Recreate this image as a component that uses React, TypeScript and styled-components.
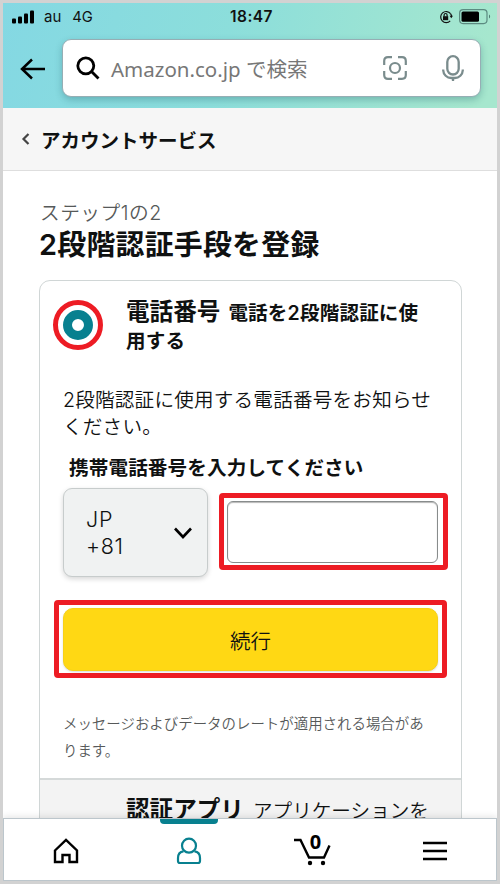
import React from "react";
import styled, { createGlobalStyle } from "styled-components";

const GlobalStyle = createGlobalStyle`
  *, *::before, *::after { box-sizing: border-box; }
  body {
    margin: 0;
    font-family: Inter, "Noto Sans CJK JP", sans-serif;
    color: #0f1111;
  }
`;

const Screen = styled.div`
  display: flex;
  flex-direction: column;
  width: 500px;
  height: 884px;
  border: 3px solid #d2d2d2;
  background: #fff;
  overflow: hidden;
`;

const Header = styled.header`
  flex: none;
  height: 105px;
  background: linear-gradient(105deg, #84d8e3 0%, #8cdedb 45%, #a6e7ce 95%);
`;

const StatusBar = styled.div`
  display: grid;
  grid-template-columns: 1fr auto 1fr;
  align-items: center;
  height: 28px;
  padding: 0 6px 0 9px;
  color: #111;
  font-size: 15px;
  line-height: 20px;
`;

const Carrier = styled.div`
  display: flex;
  align-items: center;
  gap: 10px;
`;

const Network = styled.span`
  margin-left: 1px;
  font-size: 14.8px;
`;

const Clock = styled.span`
  font-size: 15.5px;
  font-weight: 600;
  letter-spacing: 0.45px;
`;

const StatusIcons = styled.div`
  display: flex;
  justify-content: flex-end;
  align-items: center;
  gap: 6px;
`;

const SearchRow = styled.div`
  display: flex;
  align-items: center;
  padding: 8px 16px 0 17px;
`;

const BackIcon = styled.svg`
  flex: none;
  width: 26px;
  height: 24px;
  margin: 2px 16px 0 0;
`;

const SearchBox = styled.div`
  display: flex;
  align-items: center;
  flex: 1;
  height: 58px;
  padding: 0 16px 0 13px;
  border: 1px solid #96aeb4;
  border-radius: 9px;
  background: #fff;
  box-shadow: 0 3px 7px rgba(30, 95, 105, 0.32);
`;

const Placeholder = styled.span`
  flex: 1;
  margin: 2px 0 0 11px;
  color: #777;
  font-family: "Noto Sans", "Noto Sans CJK JP", sans-serif;
  font-size: 20.5px;
  line-height: 30px;
  white-space: pre;
`;

const MicIcon = styled.svg`
  margin-left: 35px;
`;

const Breadcrumb = styled.div`
  display: flex;
  align-items: center;
  flex: none;
  height: 63px;
  padding: 0 0 0 18px;
  border-bottom: 1px solid #dedede;
  background: #f6f6f6;
  font-size: 19.5px;
  font-weight: 600;
  gap: 10px;
`;

const Content = styled.main`
  flex: 1;
  min-height: 0;
  padding: 28px 35px 0 36px;
  overflow: hidden;
  white-space: nowrap;
`;

const Step = styled.p`
  margin: 0 0 0 1px;
  color: #565959;
  font-size: 19.7px;
  font-weight: 350;
  letter-spacing: 0.5px;
  line-height: 28px;
`;

const Heading = styled.h1`
  margin: 0;
  font-size: 28.9px;
  font-weight: 600;
  letter-spacing: 0.25px;
  line-height: 36px;
`;

const Card = styled.section`
  margin-top: 17px;
  border: 1px solid #d0d6d6;
  border-radius: 11px 11px 0 0;
  overflow: hidden;
`;

const Option = styled.div`
  display: flex;
  height: 76px;
  margin: 17px 0 0 13px;
`;

const RadioHighlight = styled.div`
  display: grid;
  place-items: center;
  width: 50px;
  height: 50px;
  margin: 2px 23px 0 0;
  border: 5px solid #ed1c24;
  border-radius: 50%;
`;

const Radio = styled.div`
  width: 30px;
  height: 30px;
  border: 9px solid #08808f;
  border-radius: 50%;
  background: #fff;
`;

const OptionText = styled.div`
  font-size: 19.55px;
  font-weight: 600;
  letter-spacing: 0.2px;
  line-height: 28px;
`;

const OptionTitle = styled.strong<{ $gap: number }>`
  margin-right: ${(p) => p.$gap}px;
  font-size: 23.6px;
  font-weight: 600;
  letter-spacing: 0;
`;

const Form = styled.div`
  padding: 0 13px 0 23px;
`;

const Description = styled.p`
  margin: 13px 0 0;
  font-size: 19.6px;
  font-weight: 350;
  letter-spacing: 0.2px;
  line-height: 27px;
`;

const FieldLabel = styled.div`
  margin: 14px 0 7px 6px;
  font-size: 19.6px;
  font-weight: 600;
  letter-spacing: 0.12px;
  line-height: 26px;
`;

const PhoneRow = styled.div`
  display: flex;
  align-items: flex-start;
`;

const CountrySelect = styled.button`
  display: flex;
  align-items: center;
  justify-content: space-between;
  width: 145px;
  height: 89px;
  padding: 0 14px 0 22px;
  border: 1px solid #c7cccc;
  border-radius: 9px;
  background: #f0f2f2;
  box-shadow: 0 2px 5px rgba(15, 17, 17, 0.17);
  color: #0f1111;
  font: 300 21.5px/27px Inter, sans-serif;
  letter-spacing: 0.7px;
  text-align: left;
`;

const Highlight = styled.div<{ $kind: "input" | "button" }>`
  width: ${(p) => (p.$kind === "input" ? 229 : 393)}px;
  height: ${(p) => (p.$kind === "input" ? 77 : 78)}px;
  margin: ${(p) => (p.$kind === "input" ? "5px 0 0 11px" : "23px 0 0 -9px")};
  padding: ${(p) => (p.$kind === "input" ? "3px 5px 2px 3px" : "3px 4px 2px 4px")};
  border: 5px solid #ed1c24;
  border-radius: 4px;
`;

const PhoneInput = styled.input`
  display: block;
  width: 100%;
  height: 100%;
  border: 1px solid #888c8c;
  border-radius: 6px;
  outline: none;
  background: #fff;
  box-shadow: inset 0 1px 1px rgba(15, 17, 17, 0.3);
`;

const ContinueButton = styled.button`
  display: block;
  width: 100%;
  height: 100%;
  padding: 0;
  border: 1px solid #f7d117;
  border-radius: 10px;
  background: #ffd814;
  box-shadow: 0 1px 2px rgba(15, 17, 17, 0.15);
  color: #0f1111;
  font: 350 20.5px/28px "Noto Sans CJK JP", sans-serif;
`;

const Notice = styled.p`
  margin: 32px 0 0;
  color: #565959;
  font-size: 14.45px;
  font-weight: 350;
  line-height: 27px;
`;

const AppOption = styled.div`
  height: 70px;
  margin-top: 14px;
  padding: 16px 0 0 86px;
  border-top: 2px solid #d5d9d9;
  background: #f3f3f3;
  font-size: 19.6px;
  font-weight: 350;
  line-height: 28px;
`;

const TabBar = styled.nav`
  display: grid;
  grid-template-columns: repeat(4, 123px);
  flex: none;
  height: 63px;
  border: 1px solid #bcc6cc;
  box-shadow: 0 -1px 7px rgba(15, 17, 17, 0.12);
  background: #fff;
  position: relative;
`;

const Tab = styled.div<{ $active?: boolean }>`
  display: grid;
  place-items: center;
  position: relative;
  padding-top: 2px;
  color: ${(p) => (p.$active ? "#08808f" : "#000")};

  &::before {
    content: "";
    display: ${(p) => (p.$active ? "block" : "none")};
    position: absolute;
    top: 0;
    left: 33px;
    width: 58px;
    height: 5px;
    border-radius: 0 0 4px 4px;
    background: #08808f;
  }
`;

const CartCount = styled.span`
  position: absolute;
  top: 13px;
  left: 59px;
  width: 13px;
  font-family: "Noto Sans", sans-serif;
  font-size: 20px;
  font-weight: 700;
  line-height: 20px;
  text-align: center;
`;

export default function App() {
  return (
    <>
      <GlobalStyle />
      <Screen>
        <Header>
          <StatusBar>
            <Carrier>
              <svg width="22" height="14" viewBox="0 0 22 14">
                <rect x="0" y="8.5" width="4" height="5" rx="1" />
                <rect x="6" y="6.5" width="4" height="7" rx="1" />
                <rect x="12" y="3.5" width="4" height="10" rx="1" />
                <rect x="18" y="0.5" width="4" height="13" rx="1" />
              </svg>
              <span>au</span>
              <Network>4G</Network>
            </Carrier>
            <Clock>18:47</Clock>
            <StatusIcons>
              <svg width="14" height="14" viewBox="0 0 14 14" fill="none" stroke="#111" strokeWidth="1.2">
                <path d="M11.5 3.6A5.5 5.5 0 1 0 11.2 10.8" />
                <path d="M11.5 3.6A5.5 5.5 0 0 1 12.5 6" />
                <path d="M10.6 5.7h3.4l-1.7 2.6z" fill="#111" stroke="none" />
                <rect x="4" y="6.2" width="5.2" height="4" fill="#111" stroke="none" />
                <path d="M5.1 6.5V5a1.5 1.5 0 0 1 3 0v1.5" />
              </svg>
              <svg width="32" height="16" viewBox="0 0 32 16">
                <rect x="0.6" y="0.6" width="27.4" height="14" rx="3.5" fill="none" stroke="#5b8a80" strokeWidth="1.2" />
                <rect x="2.5" y="2.5" width="17.5" height="10.2" rx="1.5" />
                <path d="M30 5.6v4c1.5-.5 1.5-3.5 0-4" fill="#4f7f75" />
              </svg>
            </StatusIcons>
          </StatusBar>
          <SearchRow>
            <BackIcon viewBox="0 0 26 24" fill="none" stroke="#000" strokeWidth="2.5">
              <path d="M25 12H2M12 2.5 2 12l10 9.5" />
            </BackIcon>
            <SearchBox>
              <svg width="24" height="24" viewBox="0 0 24 24" fill="none" stroke="#000" strokeWidth="2.8">
                <circle cx="9.8" cy="9.8" r="8" />
                <path d="m15.5 15.5 7 7" />
              </svg>
              <Placeholder>Amazon.co.jp で検索</Placeholder>
              <svg width="24" height="24" viewBox="0 0 24 24" fill="none" stroke="#7a8c8d" strokeWidth="2.2">
                <path d="M1.2 9V5q0-3.8 3.8-3.8h4M15 1.2h4q3.8 0 3.8 3.8v4M22.8 15v4q0 3.8-3.8 3.8h-4M9 22.8H5q-3.8 0-3.8-3.8v-4" />
                <circle cx="12" cy="12" r="5" />
              </svg>
              <MicIcon width="22" height="26" viewBox="0 0 22 26" fill="none" stroke="#7a8c8d" strokeWidth="2.3">
                <rect x="5.3" y="1.2" width="11.4" height="18.3" rx="5.7" />
                <path d="M1.2 14.5v.8a8 8 0 0 0 8 7.7h3.6a8 8 0 0 0 8-7.7v-.8M11 23v3" />
              </MicIcon>
            </SearchBox>
          </SearchRow>
        </Header>

        <Breadcrumb>
          <svg width="10" height="12" viewBox="0 0 10 12" fill="none" stroke="#444" strokeWidth="2.2">
            <path d="M7.5 1 2.5 6l5 5" />
          </svg>
          <span>アカウントサービス</span>
        </Breadcrumb>

        <Content>
          <Step>ステップ1の2</Step>
          <Heading>2段階認証手段を登録</Heading>
          <Card>
            <Option>
              <RadioHighlight>
                <Radio />
              </RadioHighlight>
              <OptionText>
                <OptionTitle $gap={8}>電話番号</OptionTitle>
                電話を2段階認証に使
                <br />
                用する
              </OptionText>
            </Option>
            <Form>
              <Description>
                2段階認証に使用する電話番号をお知らせ
                <br />
                ください。
              </Description>
              <FieldLabel>携帯電話番号を入力してください</FieldLabel>
              <PhoneRow>
                <CountrySelect>
                  <span>
                    JP
                    <br />
                    +81
                  </span>
                  <svg width="20" height="14" viewBox="0 0 20 14" fill="none" stroke="#000" strokeWidth="2.6">
                    <path d="m2 2.5 8 8.5 8-8.5" />
                  </svg>
                </CountrySelect>
                <Highlight $kind="input">
                  <PhoneInput aria-label="携帯電話番号" />
                </Highlight>
              </PhoneRow>
              <Highlight $kind="button">
                <ContinueButton>続行</ContinueButton>
              </Highlight>
              <Notice>
                メッセージおよびデータのレートが適用される場合があ
                <br />
                ります。
              </Notice>
            </Form>
            <AppOption>
              <OptionTitle $gap={9}>認証アプリ</OptionTitle>
              アプリケーションを
            </AppOption>
          </Card>
        </Content>

        <TabBar>
          <Tab>
            <svg width="26" height="26" viewBox="0 0 26 26" fill="none" stroke="currentColor" strokeWidth="2.4">
              <path d="M2 12.5 13 2l11 10.500V24h-7.500v-7h-7v7H2z" />
            </svg>
          </Tab>
          <Tab $active>
            <svg width="26" height="28" viewBox="0 0 26 28" fill="none" stroke="currentColor" strokeWidth="2.2">
              <circle cx="13" cy="8.7" r="7" />
              <path d="M7.5 14.3C3.500 14.800 2 17.500 2 21v3q0 2 2 2h18q2 0 2-2v-3c0-3.500-1.500-6.200-5.500-6.700" />
            </svg>
          </Tab>
          <Tab>
            <svg width="38" height="30" viewBox="0 0 38 30" fill="none" stroke="currentColor" strokeWidth="2.4">
              <path d="M1 4h6.500L16 21.500h15L36.500 9.500" />
              <circle cx="17" cy="27" r="2.2" fill="currentColor" stroke="none" />
              <circle cx="30" cy="27" r="2.2" fill="currentColor" stroke="none" />
            </svg>
            <CartCount>0</CartCount>
          </Tab>
          <Tab>
            <svg width="24" height="20" viewBox="0 0 24 20" stroke="currentColor" strokeWidth="2.6">
              <path d="M0 2h24M0 10h24M0 18h24" />
            </svg>
          </Tab>
        </TabBar>
      </Screen>
    </>
  );
}
